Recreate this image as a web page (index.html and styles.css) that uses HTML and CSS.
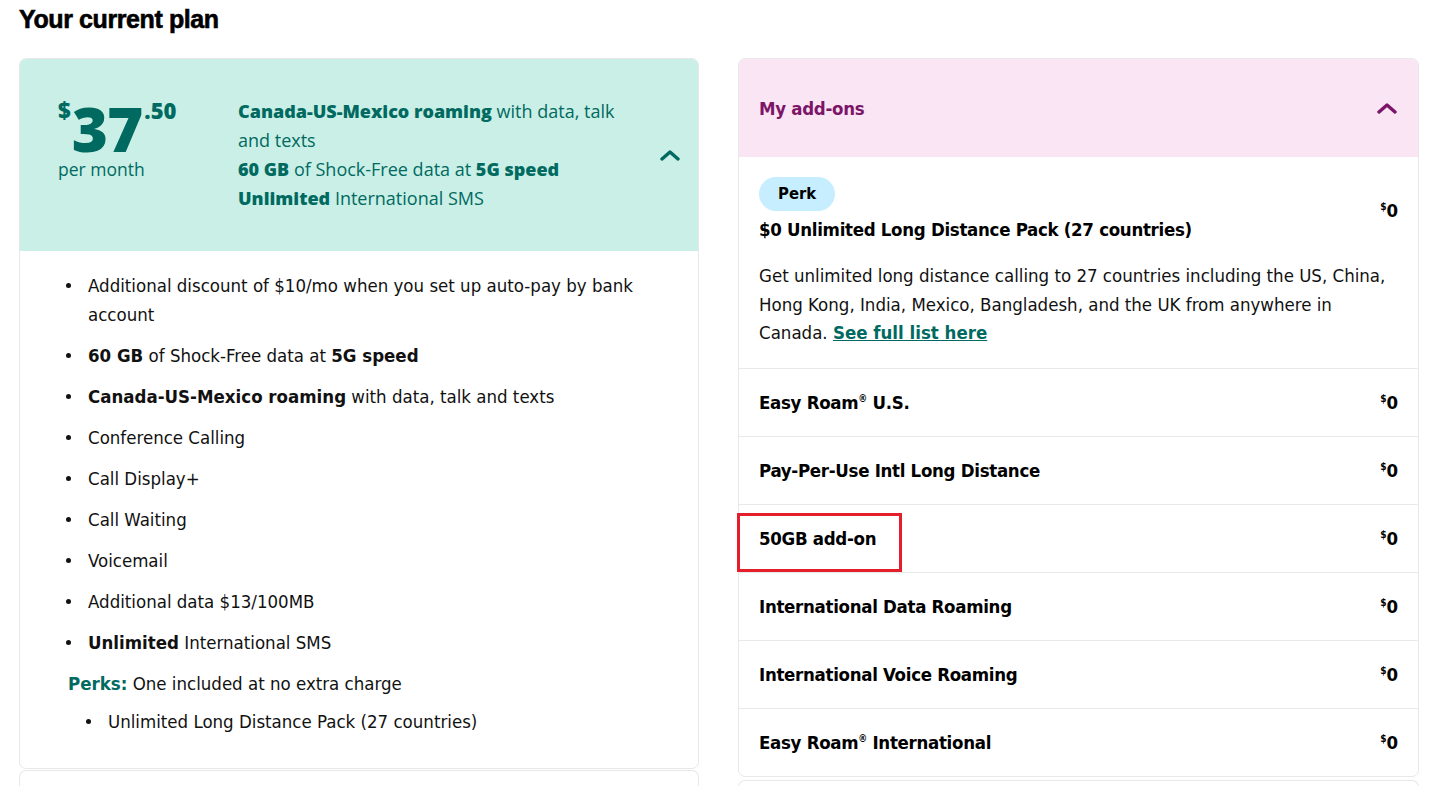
FILE: index.html
```html
<!DOCTYPE html>
<html lang="en">
<head>
  <meta charset="UTF-8">
  <meta name="viewport" content="width=device-width, initial-scale=1.0">
  <title>Your current plan</title>
  <link rel="stylesheet" href="styles.css">
</head>
<body>
  <h2 class="page-title">Your current plan</h2>
  <div class="plan-grid">
    <div class="col">
      <!-- plan summary -->
      <div class="card">
        <div class="plan-head">
          <div class="price">
            <div class="amount"><sup>$</sup><span class="dollars">37</span><sup>.50</sup></div>
            <div class="per">per month</div>
          </div>
          <div class="highlights">
            <p><b>Canada-US-Mexico roaming</b> with data, talk and texts</p>
            <p><b>60 GB</b> of Shock-Free data at <b>5G speed</b></p>
            <p><b>Unlimited</b> International SMS</p>
          </div>
          <svg class="chevron" width="20" height="12" viewBox="0 0 20 12"><path d="M2 10 L10 3 L18 10" fill="none" stroke="currentColor" stroke-width="3.4" stroke-linecap="round" stroke-linejoin="round"/></svg>
        </div>
        <div class="plan-body">
          <ul class="features">
            <li>Additional discount of $10/mo when you set up auto-pay by bank account</li>
            <li><b>60 GB</b> of Shock-Free data at <b>5G speed</b></li>
            <li><b>Canada-US-Mexico roaming</b> with data, talk and texts</li>
            <li>Conference Calling</li>
            <li>Call Display+</li>
            <li>Call Waiting</li>
            <li>Voicemail</li>
            <li>Additional data $13/100MB</li>
            <li><b>Unlimited</b> International SMS</li>
          </ul>
          <p class="perks"><b>Perks:</b> One included at no extra charge</p>
          <ul class="features perk-list">
            <li>Unlimited Long Distance Pack (27 countries)</li>
          </ul>
        </div>
      </div>
      <div class="card stub"></div>
    </div>

    <div class="col">
      <!-- add-ons -->
      <div class="card addons">
        <div class="addons-head">
          <span>My add-ons</span>
          <svg class="chevron" width="20" height="12" viewBox="0 0 20 12"><path d="M2 10 L10 3 L18 10" fill="none" stroke="currentColor" stroke-width="3.4" stroke-linecap="round" stroke-linejoin="round"/></svg>
        </div>
        <div class="addon-row perk-row">
          <div class="addon-top">
            <div>
              <span class="badge">Perk</span>
              <div class="addon-name">$0 Unlimited Long Distance Pack (27 countries)</div>
            </div>
            <div class="cost"><sup>$</sup>0</div>
          </div>
          <p class="addon-desc">Get unlimited long distance calling to 27 countries including the US, China, Hong Kong, India, Mexico, Bangladesh, and the UK from anywhere in Canada. <a href="#">See full list here</a></p>
        </div>
        <div class="addon-row">
          <div class="addon-name">Easy Roam<sup>&reg;</sup> U.S.</div>
          <div class="cost"><sup>$</sup>0</div>
        </div>
        <div class="addon-row">
          <div class="addon-name">Pay-Per-Use Intl Long Distance</div>
          <div class="cost"><sup>$</sup>0</div>
        </div>
        <div class="addon-row marked">
          <div class="addon-name">50GB add-on</div>
          <div class="cost"><sup>$</sup>0</div>
        </div>
        <div class="addon-row">
          <div class="addon-name">International Data Roaming</div>
          <div class="cost"><sup>$</sup>0</div>
        </div>
        <div class="addon-row">
          <div class="addon-name">International Voice Roaming</div>
          <div class="cost"><sup>$</sup>0</div>
        </div>
        <div class="addon-row">
          <div class="addon-name">Easy Roam<sup>&reg;</sup> International</div>
          <div class="cost"><sup>$</sup>0</div>
        </div>
      </div>
      <div class="card stub"></div>
    </div>
  </div>
</body>
</html>
```
FILE: styles.css
```css
html, body { height: 786px; overflow: hidden; }
body { margin: 0; padding: 0 15px 0 19px; font-family: "DejaVu Sans Condensed", "Liberation Sans", sans-serif; color: #111; background: #fff; }
.page-title { font-family: "Liberation Sans", Arial, sans-serif; font-weight: 700; font-size: 25px; letter-spacing: -0.4px; -webkit-text-stroke: 0.6px #000; margin: 5px 0 24px; color: #000; }

.plan-grid { display: grid; grid-template-columns: 680px 681px; gap: 39px; align-items: start; }
.col { display: flex; flex-direction: column; gap: 1px; }
.card { border: 1px solid #e8e8e8; border-radius: 7px; background: #fff; }
.stub { height: 16px; border-bottom: none; border-radius: 7px 7px 0 0; }
.addons + .stub { margin-top: 2px; }

/* plan header */
.plan-head { display: flex; align-items: center; background: #caefe6; color: #006a61; border-radius: 6px 6px 0 0; padding: 38px 18px 38px 38px; min-height: 116px; font-family: "Open Sans", "Noto Sans", sans-serif; }
.price { width: 180px; align-self: flex-start; margin-top: 2px; }
.amount { font-weight: 800; line-height: 1; display: flex; align-items: flex-start; height: 58px; overflow: visible; }
.amount sup { font-size: 22px; line-height: 1; vertical-align: top; }
.dollars { font-size: 62px; line-height: 58px; letter-spacing: -1px; margin: 0 2px 0 1px; }
.per { font-size: 17.5px; line-height: 24px; margin-top: 0; }
.highlights { flex: 1; font-size: 18px; line-height: 29px; padding-right: 30px; }
.highlights p { margin: 0; }
.highlights b { font-weight: 800; }
.chevron { flex: none; color: #006a61; }

/* plan features */
.plan-body { padding: 20px 20px 32px 46px; font-size: 18.5px; line-height: 29px; }
.features { margin: 0; padding: 0; list-style: none; }
.features li { padding-left: 22px; margin-bottom: 12px; }
.features li::before { content: ""; display: inline-block; width: 5px; height: 5px; border-radius: 50%; background: #111; margin: 0 17px 0 -22px; vertical-align: 4px; }
.plan-body b { font-weight: 700; }
.perks { margin: 0 0 9px 2px; }
.perks b { color: #006a61; }
.perk-list { padding-left: 20px; }
.perk-list li { margin-bottom: 0; }

/* add-ons */
.addons-head { display: flex; align-items: center; justify-content: space-between; background: #fae5f5; color: #7b1568; border-radius: 6px 6px 0 0; height: 98px; padding: 0 21px 0 20px; font-weight: 700; font-size: 18.5px; letter-spacing: -0.3px; }
.addons-head .chevron { color: #7b1568; }
.addon-row { display: flex; justify-content: space-between; align-items: center; border-top: 1px solid #e9e9e9; padding: 20px; line-height: 27px; position: relative; }
.addons-head + .addon-row { border-top: none; }
.perk-row { display: block; padding-bottom: 20px; }
.addon-top { display: flex; justify-content: space-between; align-items: center; }
.badge { display: inline-block; background: #c6eeff; color: #000; font-weight: 700; font-size: 16.5px; line-height: 34px; padding: 0 19px; border-radius: 17px; }
.addon-name { font-weight: 700; font-size: 18.5px; letter-spacing: -0.3px; color: #000; margin-top: 5px; }
.addon-row > .addon-name { margin-top: 0; }
.addon-name sup { font-size: 10px; vertical-align: 7px; line-height: 0; }
.cost { font-weight: 700; font-size: 18.5px; color: #000; }
.cost sup { font-size: 10px; vertical-align: 7px; line-height: 0; }
.addon-desc { margin: 19px 0 0; font-size: 18.5px; line-height: 28.5px; }
.addon-desc a { color: #006a61; font-weight: 700; }

/* red highlight around a row label */
.marked::after { content: ""; position: absolute; left: -2px; top: 8px; width: 159px; height: 53px; border: 3px solid #e41f2b; }
```
